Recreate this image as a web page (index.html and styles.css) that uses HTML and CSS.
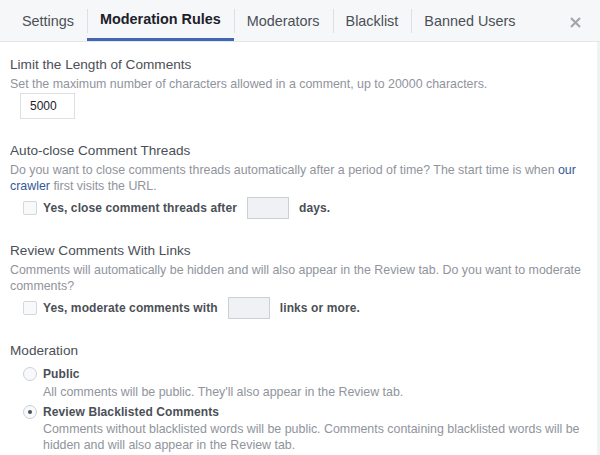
FILE: index.html
```html
<!DOCTYPE html>
<html>
    <head>
        <meta charset="UTF-8">
        <title>Moderation Rules</title>
        <link rel="stylesheet" href="styles.css">
    </head>
    <body>
        <div class="dialog">
            <div class="tabs">
                <div class="tab">Settings</div>
                <div class="tab active">Moderation Rules</div>
                <div class="tab">Moderators</div>
                <div class="tab">Blacklist</div>
                <div class="tab">Banned Users</div>
                <div class="close">
                    <svg width="11" height="11" viewBox="0 0 11 11">
                        <path d="M1 1L10 10M10 1L1 10" stroke="#a3a7ad" stroke-width="2.2"/>
                    </svg>
                </div>
            </div>

            <div class="content">
                <div class="section">
                    <div class="title">Limit the Length of Comments</div>
                    <div class="desc">Set the maximum number of characters allowed in a comment, up to 20000 characters.</div>
                    <div class="length-box">5000</div>
                </div>

                <div class="section">
                    <div class="title">Auto-close Comment Threads</div>
                    <div class="desc">Do you want to close comments threads automatically after a period of time? The start time is when <a href="#">our crawler</a> first visits the URL.</div>
                    <div class="option">
                        <span class="checkbox"></span>
                        <span class="label">Yes, close comment threads after</span>
                        <span class="small-box"></span>
                        <span class="label">days.</span>
                    </div>
                </div>

                <div class="section">
                    <div class="title">Review Comments With Links</div>
                    <div class="desc">Comments will automatically be hidden and will also appear in the Review tab. Do you want to moderate comments?</div>
                    <div class="option">
                        <span class="checkbox"></span>
                        <span class="label">Yes, moderate comments with</span>
                        <span class="small-box"></span>
                        <span class="label">links or more.</span>
                    </div>
                </div>

                <div class="section">
                    <div class="title">Moderation</div>
                    <div class="radio-row">
                        <span class="radio"></span>
                        <span class="label">Public</span>
                    </div>
                    <div class="desc indent">All comments will be public. They'll also appear in the Review tab.</div>
                    <div class="radio-row">
                        <span class="radio checked"></span>
                        <span class="label">Review Blacklisted Comments</span>
                    </div>
                    <div class="desc indent last">Comments without blacklisted words will be public. Comments containing blacklisted words will be hidden and will also appear in the Review tab.</div>
                </div>
            </div>
        </div>
    </body>
</html>
```

FILE: styles.css
```css
* {
    margin: 0;
    padding: 0;
    box-sizing: border-box;
}

html, body {
    width: 100%;
    height: 100%;
}

body {
    font-family: "Liberation Sans", Arial, sans-serif;
    background-color: #fff;
    overflow: hidden;
}

.dialog {
    width: 600px;
    height: 455px;
}

.tabs {
    height: 42px;
    background-color: #f6f7f9;
    border-bottom: 1px solid #e5e6e9;
    display: flex;
    align-items: stretch;
    padding-left: 9px;
}

.tab {
    font-size: 14.4px;
    color: #4b4f56;
    padding: 0 13px;
    line-height: 42px;
    position: relative;
}

.tab + .tab::before {
    content: "";
    position: absolute;
    left: 0;
    top: 9px;
    height: 24px;
    border-left: 1px solid #dddfe2;
}

.tab.active {
    font-weight: bold;
    color: #1d2129;
    border-bottom: 3px solid #4267b2;
    line-height: 39px;
}

.close {
    margin-left: auto;
    width: 42px;
    display: flex;
    align-items: center;
    justify-content: center;
    padding-right: 8px;
    padding-top: 4px;
}

.content {
    height: 413px;
    padding: 14px 8px 0 10px;
    border-right: 3px solid #f1f2f4;
}

.section {
    margin-bottom: 23px;
}

.title {
    font-size: 13.6px;
    line-height: 18px;
    color: #4b4f56;
}

.desc {
    font-size: 12.4px;
    line-height: 16px;
    color: #90949c;
    margin-top: 2px;
}

.desc a {
    color: #365899;
    text-decoration: none;
}

.desc.indent {
    padding-left: 33px;
    margin-top: 2px;
}

.desc.last {
    margin-top: 1px;
}

.length-box {
    margin: 1px 0 0 10px;
    width: 55px;
    height: 26px;
    border: 1px solid #dddfe2;
    font-size: 12px;
    color: #1d2129;
    padding-left: 9px;
    line-height: 24px;
}

.option {
    display: flex;
    align-items: center;
    margin-top: 3px;
    padding-left: 13px;
    height: 22px;
}

.checkbox {
    width: 14px;
    height: 14px;
    border: 1px solid #d4d7db;
    border-radius: 2px;
    background-color: #f8f9fa;
    margin-right: 6px;
}

.label {
    font-size: 12px;
    font-weight: bold;
    color: #4b4f56;
    letter-spacing: 0.1px;
}

.small-box {
    width: 42px;
    height: 22px;
    border: 1px solid #ccd0d5;
    background-color: #eff1f4;
    margin: 0 10px;
}

.radio-row {
    display: flex;
    align-items: center;
    padding-left: 13px;
    height: 16px;
    margin-top: 6px;
}

.radio-row + .desc + .radio-row {
    margin-top: 4px;
}

.radio {
    width: 14px;
    height: 14px;
    border: 1px solid #ccd0d5;
    border-radius: 50%;
    background-color: #f8f9fa;
    margin-right: 6px;
    position: relative;
}

.radio.checked::after {
    content: "";
    position: absolute;
    left: 4px;
    top: 4px;
    width: 4px;
    height: 4px;
    border-radius: 50%;
    background-color: #4b4f56;
}
```
